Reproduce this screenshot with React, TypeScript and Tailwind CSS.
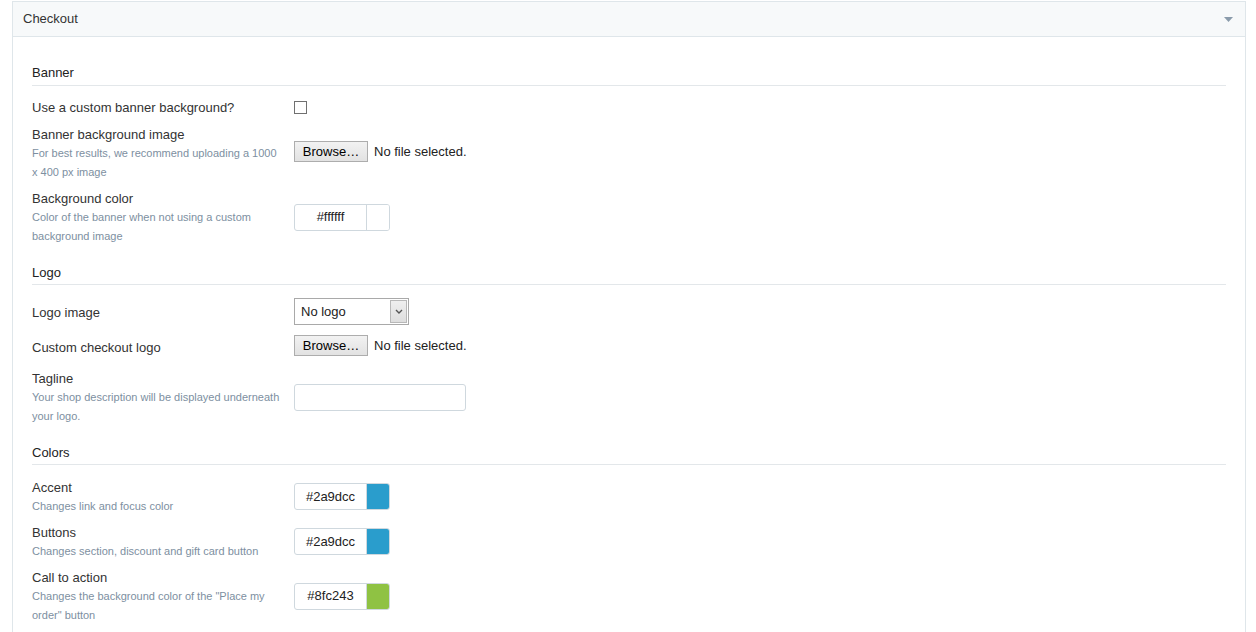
import React from "react";

type RowProps = {
  label: string;
  help?: string;
  mt: string;
  children: React.ReactNode;
};

function Row({ label, help, mt, children }: RowProps) {
  return (
    <div className={`flex items-center ${mt}`}>
      <div className="w-[250px] mr-[12px] shrink-0">
        <div className="text-[13px] pt-[2px] leading-[18px] text-[#333]">{label}</div>
        {help && (
          <div className="text-[11px] leading-[19px] text-[#7d8fa1]">{help}</div>
        )}
      </div>
      <div className="flex items-center">{children}</div>
    </div>
  );
}

function Heading({ text, className }: { text: string; className: string }) {
  return (
    <div
      className={`text-[13px] leading-[20px] text-[#222] border-b border-[#e3e7ea] ${className}`}
    >
      {text}
    </div>
  );
}

function FileInput() {
  return (
    <div className="flex items-start h-[24px]">
      <button className="h-[21px] w-[74px] border border-[#adadad] bg-gradient-to-b from-[#f2f2f2] to-[#e2e2e2] text-[13px] text-black leading-none">
        Browse…
      </button>
      <span className="ml-[6px] h-[21px] flex items-center text-[13px] text-[#222]">
        No file selected.
      </span>
    </div>
  );
}

function ColorInput({ value, swatch }: { value: string; swatch: string }) {
  return (
    <div className="flex h-[27px] w-[96px] border border-[#cfd8de] rounded-[3px] overflow-hidden">
      <div className="w-[71px] flex items-center justify-center text-[13px] text-[#222]">
        {value}
      </div>
      <div
        className="flex-1 border-l border-[#cfd8de]"
        style={{ backgroundColor: swatch }}
      />
    </div>
  );
}

export default function App() {
  return (
    <div
      className="min-h-screen bg-white"
      style={{ fontFamily: '"Liberation Sans", Arial, sans-serif' }}
    >
      <div className="ml-[12px] mt-px w-[1234px] border border-[#dfe6ea] border-b-0">
        {/* header */}
        <div className="h-[35px] bg-[#f7f9fa] border-b border-[#dfe6ea] flex items-center justify-between pl-[10px] pr-[12px]">
          <span className="text-[13px] text-[#333]">Checkout</span>
          <svg width="9" height="5" viewBox="0 0 9 5">
            <path d="M0 0 H9 L4.5 5 Z" fill="#8a9bab" />
          </svg>
        </div>

        {/* body */}
        <div className="px-[19px] pt-[25px] pb-[20px]">
          <Heading text="Banner" className="pt-[1px] pb-[2px]" />
          <Row label="Use a custom banner background?" mt="mt-[11px]">
            <span className="block w-[13px] h-[13px] border border-[#707070] bg-white" />
          </Row>
          <Row
            label="Banner background image"
            help="For best results, we recommend uploading a 1000 x 400 px image"
            mt="mt-[7px]"
          >
            <FileInput />
          </Row>
          <Row
            label="Background color"
            help="Color of the banner when not using a custom background image"
            mt="mt-[6px]"
          >
            <ColorInput value="#ffffff" swatch="#ffffff" />
          </Row>

          <Heading text="Logo" className="mt-[15px] pt-[2px] pb-[1px]" />
          <Row label="Logo image" mt="mt-[13px]">
            <div className="flex h-[27px] w-[115px] border border-[#a9a9a9] bg-white">
              <div className="flex-1 flex items-center pl-[6px] text-[13px] text-[#222]">
                No logo
              </div>
              <div className="w-[17px] m-px border border-[#b8b8b8] bg-gradient-to-b from-[#efefef] to-[#dedede] flex items-center justify-center">
                <svg width="8" height="5" viewBox="0 0 8 5">
                  <path d="M1 1 L4 4 L7 1" stroke="#555" strokeWidth="1.4" fill="none" />
                </svg>
              </div>
            </div>
          </Row>
          <Row label="Custom checkout logo" mt="mt-[10px]">
            <FileInput />
          </Row>
          <Row
            label="Tagline"
            help="Your shop description will be displayed underneath your logo."
            mt="mt-[9px]"
          >
            <div className="h-[27px] w-[172px] border border-[#cfd8de] rounded-[3px] bg-white" />
          </Row>

          <Heading text="Colors" className="mt-[15px] pt-[2px] pb-[1px]" />
          <Row label="Accent" help="Changes link and focus color" mt="mt-[12px]">
            <ColorInput value="#2a9dcc" swatch="#2a9dcc" />
          </Row>
          <Row
            label="Buttons"
            help="Changes section, discount and gift card button"
            mt="mt-[6px]"
          >
            <ColorInput value="#2a9dcc" swatch="#2a9dcc" />
          </Row>
          <Row
            label="Call to action"
            help={'Changes the background color of the "Place my order" button'}
            mt="mt-[6px]"
          >
            <ColorInput value="#8fc243" swatch="#8fc243" />
          </Row>
        </div>
      </div>
    </div>
  );
}
